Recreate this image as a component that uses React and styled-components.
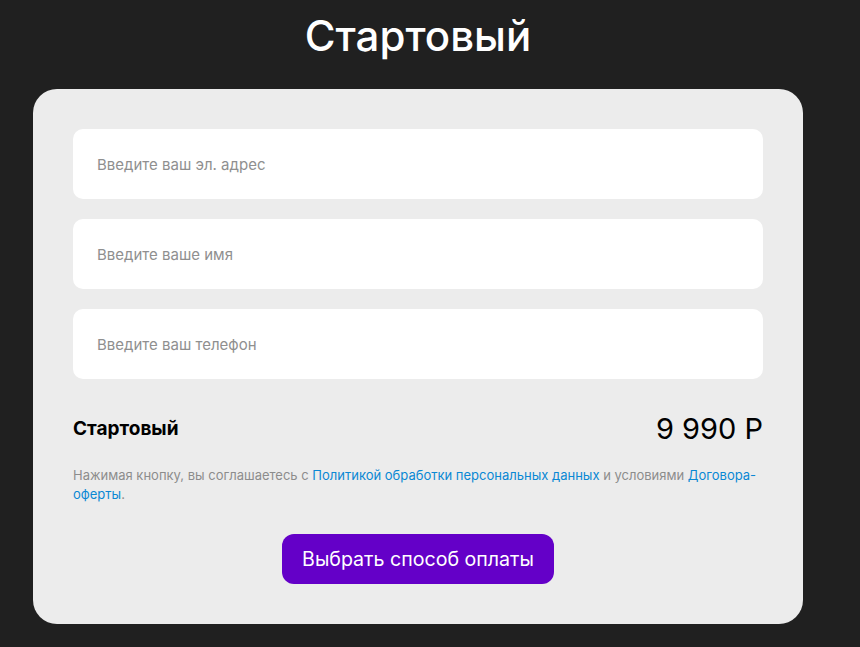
import React from 'react';
import styled, { createGlobalStyle } from 'styled-components';

const GlobalStyle = createGlobalStyle`
  html, body {
    margin: 0;
    padding: 0;
    background: #202020;
    font-family: Inter, "Noto Sans", sans-serif;
  }
`;

const Page = styled.div`
  min-height: 647px;
  padding: 0 0 0 33px;
  box-sizing: border-box;
  background: #202020;
`;

const Wrap = styled.div`
  width: 770px;
  display: flex;
  flex-direction: column;
  align-items: center;
`;

const Title = styled.h1`
  margin: 0;
  height: 89px;
  padding-top: 8px;
  box-sizing: border-box;
  font-size: 42px;
  font-weight: 500;
  color: #fff;
  line-height: 56px;
`;

const Card = styled.div`
  width: 100%;
  box-sizing: border-box;
  background: #ececec;
  border-radius: 24px;
  padding: 40px;
  display: flex;
  flex-direction: column;
`;

const Fields = styled.div`
  display: flex;
  flex-direction: column;
  gap: 20px;
`;

const Input = styled.input`
  height: 70px;
  border: none;
  outline: none;
  border-radius: 10px;
  background: #fff;
  padding: 0 24px;
  font-family: Inter, "Noto Sans", sans-serif;
  font-size: 15px;
  color: #222;
  &::placeholder {
    color: #8f8f8f;
  }
`;

const Summary = styled.div`
  display: flex;
  justify-content: space-between;
  align-items: center;
  margin-top: 32px;
`;

const Plan = styled.div`
  font-size: 19px;
  font-weight: 700;
  color: #000;
`;

const Price = styled.div`
  font-size: 29px;
  font-weight: 400;
  color: #000;
`;

const Note = styled.p`
  margin: 20px 0 0;
  font-size: 13px;
  line-height: 19px;
  color: #8c8c8c;
`;

const Link = styled.a`
  color: #0a88d4;
  text-decoration: none;
`;

const Pay = styled.button`
  align-self: center;
  margin-top: 30px;
  height: 50px;
  padding: 0 20px;
  border: none;
  border-radius: 12px;
  background: #6400c8;
  color: #fff;
  font-family: Inter, "Noto Sans", sans-serif;
  font-size: 19.6px;
  cursor: pointer;
`;

export default function App() {
  return (
    <>
      <GlobalStyle />
      <Page>
        <Wrap>
          <Title>Стартовый</Title>
          <Card>
            <Fields>
              <Input placeholder="Введите ваш эл. адрес" />
              <Input placeholder="Введите ваше имя" />
              <Input placeholder="Введите ваш телефон" />
            </Fields>
            <Summary>
              <Plan>Стартовый</Plan>
              <Price>9 990 Р</Price>
            </Summary>
            <Note>
              Нажимая кнопку, вы соглашаетесь с{' '}
              <Link href="#">Политикой обработки персональных данных</Link> и условиями{' '}
              <Link href="#">Договора-оферты</Link>.
            </Note>
            <Pay>Выбрать способ оплаты</Pay>
          </Card>
        </Wrap>
      </Page>
    </>
  );
}
